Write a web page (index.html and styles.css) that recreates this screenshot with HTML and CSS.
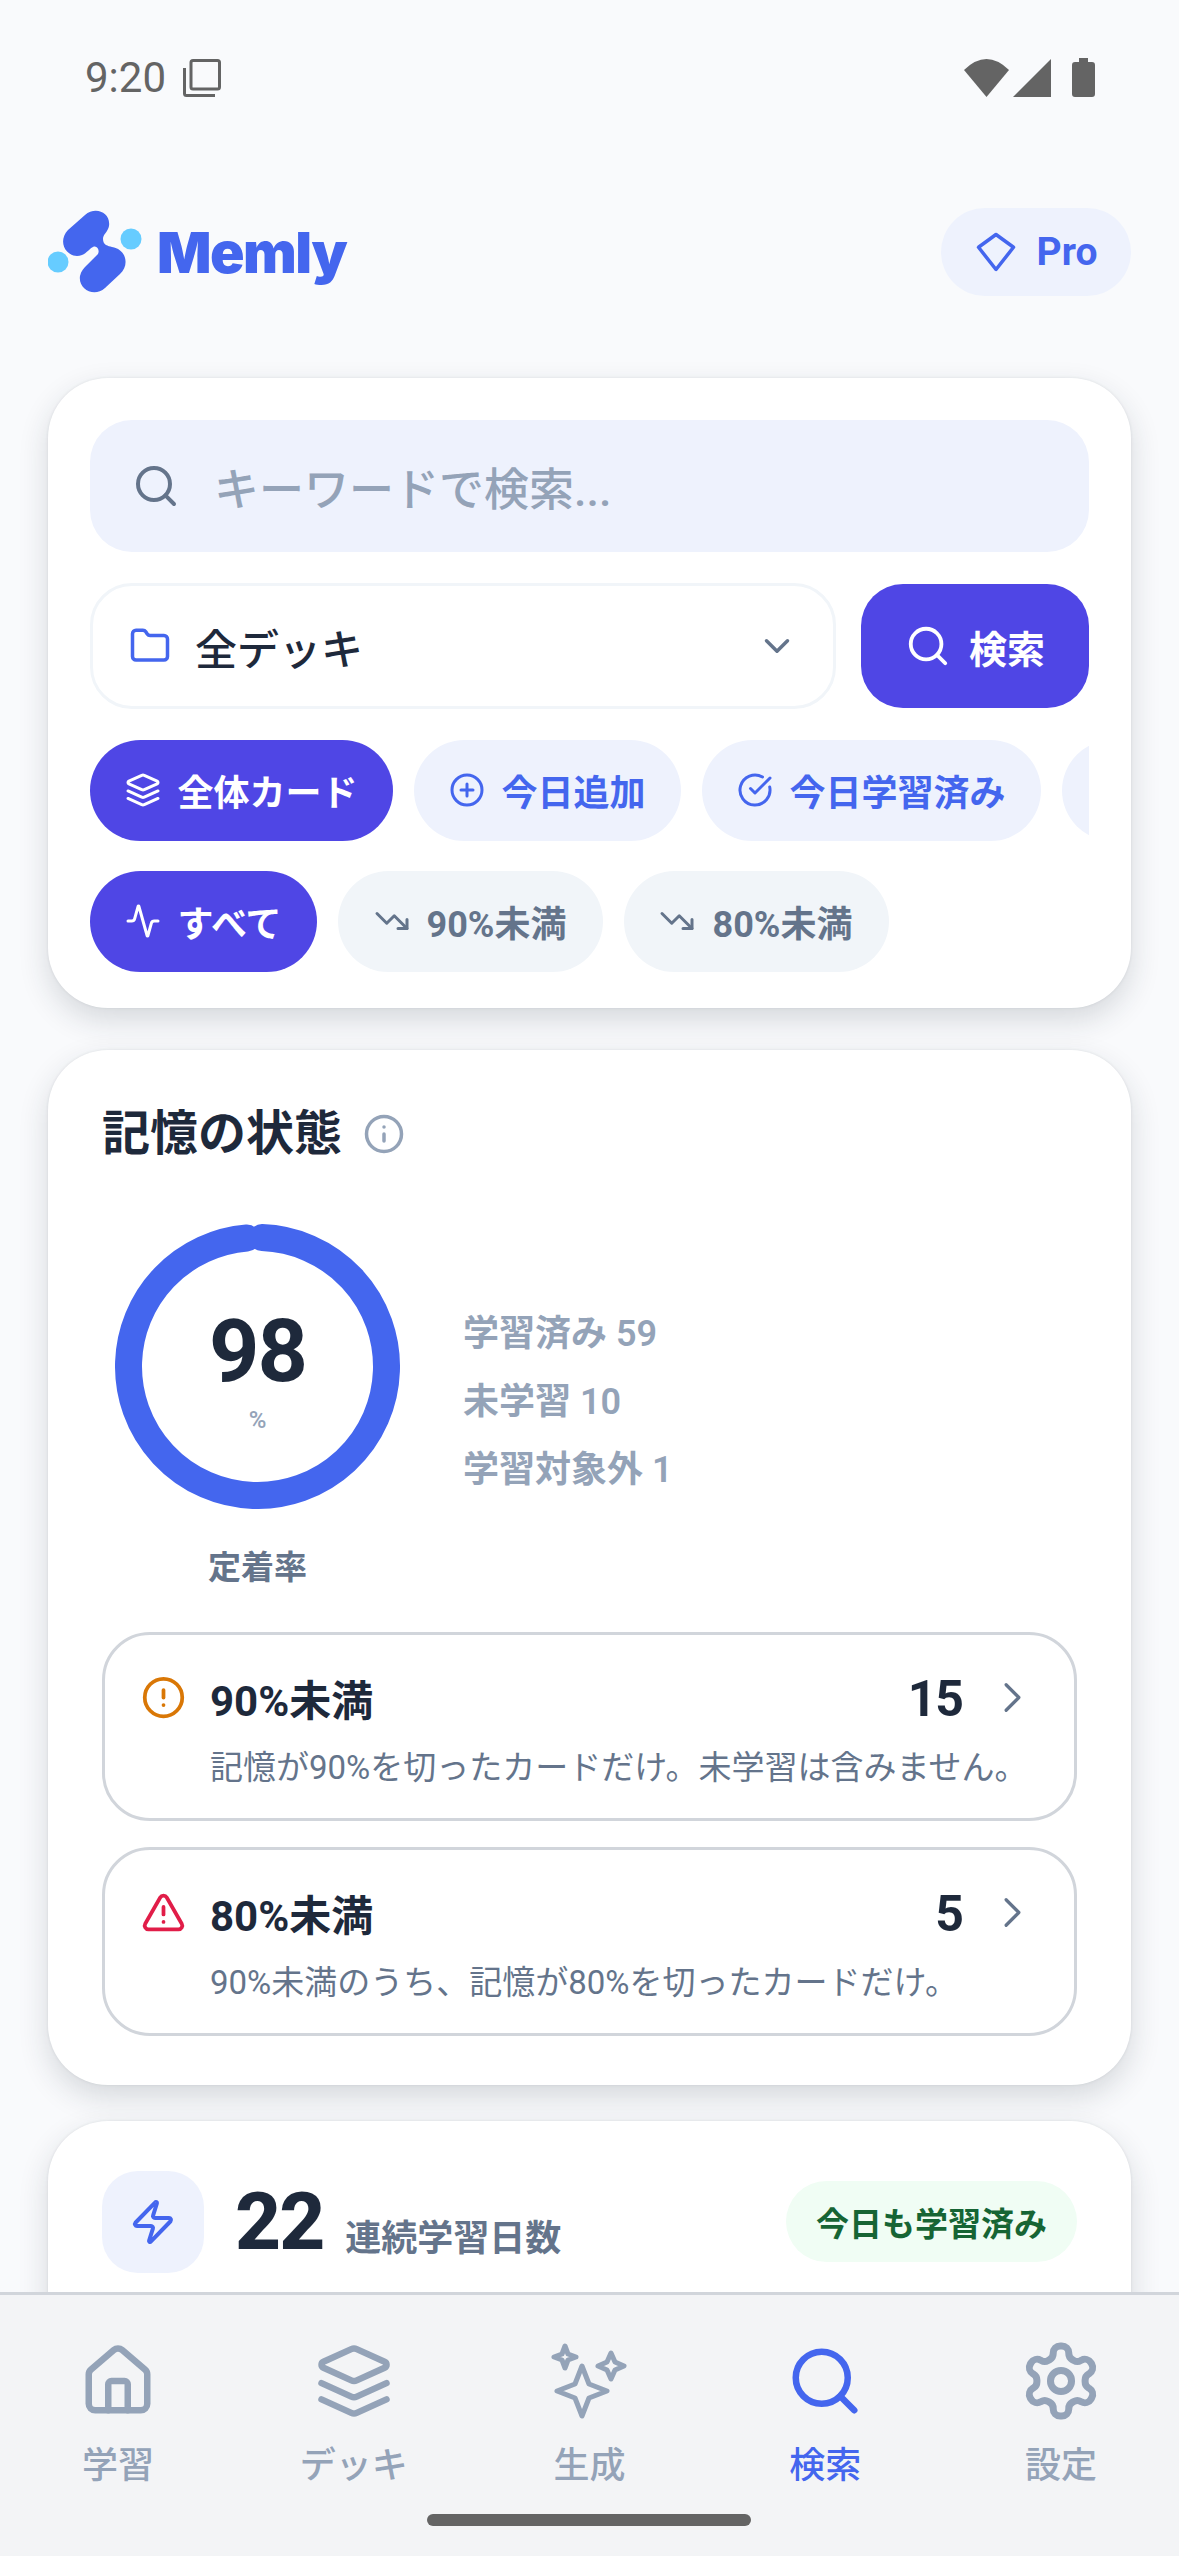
FILE: index.html
```html
<!DOCTYPE html>
<html lang="ja">
<head>
<meta charset="utf-8">
<title>Memly</title>
<link rel="stylesheet" href="styles.css">
</head>
<body>
<div class="app">
  <div class="status">
    <div class="status-left">
      <span class="time">9:20</span>
      <svg class="st-copy" viewBox="0 0 38 38" fill="none" stroke="#646464" stroke-width="3"><rect x="8" y="1.500" width="28.500" height="28.500" rx="2"/><path d="M1.500 9v25.500a2 2 0 0 0 2 2H32"/></svg>
    </div>
    <div class="status-right">
      <svg class="st-wifi" viewBox="0 0 45 38"><path fill="#646464" d="M22.500 38 0 11Q22.500-11 45 11Z"/></svg>
      <svg class="st-sig" viewBox="0 0 38 38"><path fill="#646464" d="M38 0v38H0Z"/></svg>
      <svg class="st-bat" viewBox="0 0 23 39"><path fill="#646464" d="M7 0h9v4h4a3 3 0 0 1 3 3v29a3 3 0 0 1-3 3H3a3 3 0 0 1-3-3V7a3 3 0 0 1 3-3h4Z"/></svg>
    </div>
  </div>

  <header class="top">
    <div class="brand">
      <svg class="logo" viewBox="0 0 94 86">
        <circle cx="10" cy="53" r="10.500" fill="#66ccff"/>
        <circle cx="83" cy="30" r="10.500" fill="#66ccff"/>
        <path fill="#4466ee" d="M20 21 37 6C47-3 63 3 61 17C60 23 55 25 55 30C55 36 60 37 64 38C78 40 82 56 72 65L57 79C46 89 30 80 32 67C33 62 36 59 39 56L50 45C52 41 49 36 45 38C41 40 39 44 34 46C20 51 8 34 20 21Z"/>
      </svg>
      <span class="wordmark">Memly</span>
    </div>
    <div class="pro">
      <svg class="ic ic-42 c-blue" viewBox="0 0 24 24"><path d="M12 2 22 9.300 12 22 2 9.300Z"/></svg>
      <span>Pro</span>
    </div>
  </header>

  <main class="content">
    <section class="card search-card">
      <div class="search-input">
        <svg class="ic ic-48 c-slate" viewBox="0 0 24 24"><circle cx="11" cy="11" r="8"/><path d="m21 21-4.300-4.300"/></svg>
        <span class="placeholder">キーワードで検索...</span>
      </div>
      <div class="select-row">
        <div class="select">
          <svg class="ic ic-42 c-blue" viewBox="0 0 24 24"><path d="M20 20a2 2 0 0 0 2-2V8a2 2 0 0 0-2-2h-7.900a2 2 0 0 1-1.690-.9L9.600 3.900A2 2 0 0 0 7.930 3H4a2 2 0 0 0-2 2v13a2 2 0 0 0 2 2Z"/></svg>
          <span class="select-label">全デッキ</span>
          <svg class="ic ic-42 c-slate" viewBox="0 0 24 24"><path d="m6 9 6 6 6-6"/></svg>
        </div>
        <div class="search-btn">
          <svg class="ic ic-46 c-white" viewBox="0 0 24 24"><circle cx="11" cy="11" r="8"/><path d="m21 21-4.300-4.300"/></svg>
          <span>検索</span>
        </div>
      </div>
      <div class="chips">
        <div class="chip active">
          <svg class="ic ic-36 c-white" viewBox="0 0 24 24"><path d="m12.830 2.180a2 2 0 0 0-1.660 0L2.600 6.080a1 1 0 0 0 0 1.830l8.580 3.910a2 2 0 0 0 1.660 0l8.580-3.900a1 1 0 0 0 0-1.830Z"/><path d="m22 17.650-9.170 4.160a2 2 0 0 1-1.660 0L2 17.650"/><path d="m22 12.650-9.170 4.160a2 2 0 0 1-1.660 0L2 12.650"/></svg>
          <span>全体カード</span>
        </div>
        <div class="chip blue">
          <svg class="ic ic-36 c-blue" viewBox="0 0 24 24"><circle cx="12" cy="12" r="10"/><path d="M8 12h8"/><path d="M12 8v8"/></svg>
          <span>今日追加</span>
        </div>
        <div class="chip blue">
          <svg class="ic ic-36 c-blue" viewBox="0 0 24 24"><path d="M21.801 10A10 10 0 1 1 17 3.335"/><path d="m9 11 3 3L22 4"/></svg>
          <span>今日学習済み</span>
        </div>
        <div class="chip blue chip-peek"></div>
      </div>
      <div class="chips chips-second">
        <div class="chip active">
          <svg class="ic ic-36 c-white" viewBox="0 0 24 24"><path d="M22 12h-2.480a2 2 0 0 0-1.930 1.460l-2.350 8.360a.25.25 0 0 1-.48 0L9.240 2.180a.25.25 0 0 0-.48 0l-2.350 8.360A2 2 0 0 1 4.490 12H2"/></svg>
          <span>すべて</span>
        </div>
        <div class="chip gray">
          <svg class="ic ic-36 c-slate" viewBox="0 0 24 24"><path d="M16 17h6v-6"/><path d="m22 17-8.500-8.500-5 5L2 7"/></svg>
          <span>90%未満</span>
        </div>
        <div class="chip gray">
          <svg class="ic ic-36 c-slate" viewBox="0 0 24 24"><path d="M16 17h6v-6"/><path d="m22 17-8.500-8.500-5 5L2 7"/></svg>
          <span>80%未満</span>
        </div>
      </div>
    </section>

    <section class="card memory-card">
      <div class="title-row">
        <h2 class="title">記憶の状態</h2>
        <svg class="ic ic-42 c-muted" viewBox="0 0 24 24"><circle cx="12" cy="12" r="10"/><path d="M12 16v-4"/><path d="M12 8h.01"/></svg>
      </div>
      <div class="gauge-row">
        <div class="gauge-col">
          <div class="gauge">
            <svg class="ring" viewBox="0 0 285 285"><circle cx="142.500" cy="142.500" r="129" fill="none" stroke="#4466ee" stroke-width="27" stroke-dasharray="795 16" stroke-linecap="round" transform="rotate(-88 142.500 142.500)"/></svg>
            <div class="gauge-text">
              <span class="pct">98</span>
              <span class="pct-unit">%</span>
            </div>
          </div>
          <div class="gauge-label">定着率</div>
        </div>
        <ul class="stats">
          <li>学習済み 59</li>
          <li>未学習 10</li>
          <li>学習対象外 1</li>
        </ul>
      </div>
      <div class="alert">
        <div class="alert-head">
          <svg class="ic ic-45 c-amber" viewBox="0 0 24 24"><circle cx="12" cy="12" r="10"/><path d="M12 8v4"/><path d="M12 16h.01"/></svg>
          <span class="alert-title">90%未満</span>
          <span class="alert-count">15</span>
          <svg class="ic ic-51 c-slate chev" viewBox="0 0 24 24"><path d="m9 18 6-6-6-6"/></svg>
        </div>
        <p class="alert-desc">記憶が90%を切ったカードだけ。未学習は含みません。</p>
      </div>
      <div class="alert">
        <div class="alert-head">
          <svg class="ic ic-45 c-rose" viewBox="0 0 24 24"><path d="m21.730 18-8-14a2 2 0 0 0-3.480 0l-8 14A2 2 0 0 0 4 21h16a2 2 0 0 0 1.730-3"/><path d="M12 9v4"/><path d="M12 17h.01"/></svg>
          <span class="alert-title">80%未満</span>
          <span class="alert-count">5</span>
          <svg class="ic ic-51 c-slate chev" viewBox="0 0 24 24"><path d="m9 18 6-6-6-6"/></svg>
        </div>
        <p class="alert-desc">90%未満のうち、記憶が80%を切ったカードだけ。</p>
      </div>
    </section>

    <section class="card streak-card">
      <div class="streak-icon">
        <svg class="ic ic-48 c-blue" viewBox="0 0 24 24"><path d="M4 14a1 1 0 0 1-.78-1.630l9.900-10.200a.5.5 0 0 1 .86.46l-1.920 6.020A1 1 0 0 0 13 10h7a1 1 0 0 1 .78 1.630l-9.900 10.200a.5.5 0 0 1-.86-.46l1.920-6.020A1 1 0 0 0 11 14z"/></svg>
      </div>
      <span class="streak-num">22</span>
      <span class="streak-label">連続学習日数</span>
      <span class="streak-pill">今日も学習済み</span>
    </section>
  </main>

  <nav class="nav">
    <div class="nav-item">
      <svg class="ic nav-ic" viewBox="0 0 24 24"><path d="M15 21v-8a1 1 0 0 0-1-1h-4a1 1 0 0 0-1 1v8"/><path d="M3 10a2 2 0 0 1 .709-1.528l7-5.999a2 2 0 0 1 2.582 0l7 5.999A2 2 0 0 1 21 10v9a2 2 0 0 1-2 2H5a2 2 0 0 1-2-2z"/></svg>
      <span>学習</span>
    </div>
    <div class="nav-item">
      <svg class="ic nav-ic" viewBox="0 0 24 24"><path d="m12.830 2.180a2 2 0 0 0-1.660 0L2.600 6.080a1 1 0 0 0 0 1.830l8.580 3.910a2 2 0 0 0 1.660 0l8.580-3.900a1 1 0 0 0 0-1.830Z"/><path d="m22 17.650-9.170 4.160a2 2 0 0 1-1.660 0L2 17.650"/><path d="m22 12.650-9.170 4.160a2 2 0 0 1-1.660 0L2 12.650"/></svg>
      <span>デッキ</span>
    </div>
    <div class="nav-item">
      <svg class="ic nav-ic nav-sparkle" viewBox="0 0 78 78"><path d="M32 24 39 42 57 49 39 56 32 74 25 56 7 49 25 42Z"/><path d="M15 4 18 12 26 15 18 18 15 26 12 18 4 15 12 12Z"/><path d="M61 11 65 20 74 24 65 28 61 37 57 28 48 24 57 20Z"/></svg>
      <span>生成</span>
    </div>
    <div class="nav-item active">
      <svg class="ic nav-ic" viewBox="0 0 24 24"><circle cx="11" cy="11" r="8"/><path d="m21 21-4.300-4.300"/></svg>
      <span>検索</span>
    </div>
    <div class="nav-item">
      <svg class="ic nav-ic nav-gear" viewBox="0 0 24 24"><path d="M12.220 2h-.44a2 2 0 0 0-2 2v.18a2 2 0 0 1-1 1.730l-.43.25a2 2 0 0 1-2 0l-.15-.08a2 2 0 0 0-2.730.73l-.22.38a2 2 0 0 0 .73 2.730l.15.1a2 2 0 0 1 1 1.720v.51a2 2 0 0 1-1 1.740l-.15.09a2 2 0 0 0-.73 2.730l.22.38a2 2 0 0 0 2.730.73l.15-.08a2 2 0 0 1 2 0l.43.25a2 2 0 0 1 1 1.730V20a2 2 0 0 0 2 2h.44a2 2 0 0 0 2-2v-.18a2 2 0 0 1 1-1.730l.43-.25a2 2 0 0 1 2 0l.15.08a2 2 0 0 0 2.730-.73l.22-.39a2 2 0 0 0-.73-2.730l-.15-.08a2 2 0 0 1-1-1.740v-.5a2 2 0 0 1 1-1.740l.15-.09a2 2 0 0 0 .73-2.730l-.22-.38a2 2 0 0 0-2.730-.73l-.15.08a2 2 0 0 1-2 0l-.43-.25a2 2 0 0 1-1-1.730V4a2 2 0 0 0-2-2z"/><circle cx="12" cy="12" r="3"/></svg>
      <span>設定</span>
    </div>
    <div class="home-bar"></div>
  </nav>
</div>
</body>
</html>
```

FILE: styles.css
```css
* { box-sizing: border-box; margin: 0; padding: 0; }
html, body { width: 1179px; height: 2556px; overflow: hidden; }
body {
  background: #f9fafc;
  font-family: Roboto, "Noto Sans CJK JP", sans-serif;
  color: #1e293b;
}
.app { display: flex; flex-direction: column; height: 2556px; }

.ic { fill: none; stroke: currentColor; stroke-width: 2; stroke-linecap: round; stroke-linejoin: round; flex: none; display: block; }
.ic-36 { width: 36px; height: 36px; }
.ic-42 { width: 42px; height: 42px; }
.ic-45 { width: 45px; height: 45px; }
.ic-46 { width: 46px; height: 46px; }
.ic-48 { width: 48px; height: 48px; }
.ic-51 { width: 51px; height: 51px; }
.c-blue { color: #4466ee; }
.c-slate { color: #64748b; }
.c-muted { color: #94a3b8; }
.c-white { color: #fff; }
.c-amber { color: #d97706; }
.c-rose { color: #e11d48; }
.chev { stroke-width: 1.500; }

.status { height: 156px; padding: 56px 84px 0 85px; display: flex; justify-content: space-between; align-items: flex-start; flex: none; }
.status-left { display: flex; align-items: center; gap: 17px; }
.time { font-size: 42px; line-height: 44px; color: #646464; }
.st-copy { width: 38px; height: 38px; }
.status-right { display: flex; align-items: center; gap: 4px; padding-top: 2px; }
.st-wifi { width: 45px; height: 38px; }
.st-sig { width: 38px; height: 38px; }
.st-bat { width: 23px; height: 39px; margin-left: 17px; }

.top { display: flex; justify-content: space-between; align-items: center; height: 88px; margin-top: 52px; padding: 0 48px; flex: none; }
.brand { display: flex; align-items: center; gap: 15px; }
.logo { width: 94px; height: 86px; }
.wordmark { font-family: Inter, sans-serif; font-size: 57px; font-weight: 900; letter-spacing: -1.500px; color: #4466ee; line-height: 1; }
.pro { width: 190px; height: 88px; background: #eef2fd; border-radius: 44px; display: flex; align-items: center; justify-content: center; gap: 20px; color: #4466ee; font-size: 39px; font-weight: 700; }

.content { flex: 1; min-height: 0; overflow: hidden; padding: 82px 48px 0; display: flex; flex-direction: column; gap: 36px; }
.card { flex: none; background: #fff; border-radius: 60px; box-shadow: 0 12px 30px rgba(30, 41, 59, .16), 0 0 3px rgba(30, 41, 59, .1); }

.search-card { height: 630px; padding: 42px 42px 0; display: flex; flex-direction: column; }
.search-input { height: 132px; background: #eef2fd; border-radius: 42px; display: flex; align-items: center; gap: 34px; padding: 0 42px; flex: none; }
.placeholder { font-size: 45px; color: #94a3b8; font-weight: 500; }
.select-row { display: flex; gap: 25px; margin-top: 31px; height: 126px; flex: none; }
.select { flex: 1; border: 3px solid #f1f5f9; border-radius: 42px; display: flex; align-items: center; padding: 0 35px 0 36px; gap: 24px; }
.select-label { font-size: 42px; font-weight: 500; color: #1e293b; flex: 1; }
.search-btn { width: 228px; background: #4f46e5; border-radius: 42px; display: flex; align-items: center; justify-content: center; gap: 18px; color: #fff; font-size: 38px; font-weight: 700; margin: 1px 0; }
.chips { display: flex; gap: 21px; height: 101px; margin-top: 31px; overflow: hidden; flex: none; }
.chips-second { margin-top: 30px; }
.chip { height: 101px; border-radius: 51px; display: flex; align-items: center; gap: 17px; padding: 0 35.500px 2px 34.500px; font-size: 36px; font-weight: 700; white-space: nowrap; flex: none; }
.chip-peek { width: 200px; }
.chip.active { background: #4f46e5; color: #fff; }
.chip.blue { background: #eef2fd; color: #4466ee; }
.chip.gray { background: #f1f5f9; color: #64748b; padding: 0 36.500px 2px 35.500px; }

.memory-card { height: 1035px; margin-top: 6px; padding: 60px 54px 0; }
.title-row { display: flex; align-items: center; gap: 21px; height: 48px; }
.title { font-size: 48px; font-weight: 700; line-height: 48px; color: #1e293b; }
.gauge-row { display: flex; align-items: flex-start; margin-top: 66px; height: 408px; padding-left: 13px; gap: 63px; }
.gauge-col { width: 285px; display: flex; flex-direction: column; align-items: center; }
.gauge { width: 285px; height: 285px; position: relative; }
.ring { width: 285px; height: 285px; display: block; }
.gauge-text { position: absolute; inset: 0; display: flex; flex-direction: column; align-items: center; justify-content: center; padding-top: 10px; }
.pct { font-size: 88px; font-weight: 700; letter-spacing: -2px; line-height: 84px; color: #1e293b; }
.pct-unit { font-size: 24px; line-height: 30px; margin-top: 12px; color: #94a3b8; font-weight: 500; }
.gauge-label { margin-top: 39px; font-size: 33px; line-height: 40px; font-weight: 700; color: #64748b; }
.stats { list-style: none; margin-top: 88px; display: flex; flex-direction: column; gap: 24px; }
.stats li { font-size: 36px; line-height: 44px; font-weight: 600; color: #94a3b8; }
.alert { height: 189px; border: 3px solid #d1d5db; border-radius: 48px; padding: 36px 36px 0 36px; margin-top: 26px; }
.gauge-row + .alert { margin-top: 0; }
.alert-head { display: flex; align-items: center; gap: 24px; height: 52px; }
.alert-title { font-size: 42px; font-weight: 700; flex: 1; color: #1e293b; }
.alert-count { font-size: 50px; font-weight: 700; letter-spacing: -1px; padding-top: 3px; color: #1e293b; }
.alert-desc { font-size: 33px; line-height: 44px; margin: 23px 0 0 69px; color: #64748b; white-space: nowrap; }

.streak-card { height: 300px; padding: 50px 54px 0; display: flex; align-items: flex-start; }
.streak-icon { width: 102px; height: 102px; background: #eef2fd; border-radius: 36px; display: flex; align-items: center; justify-content: center; flex: none; }
.streak-num { font-size: 80px; line-height: 102px; font-weight: 800; letter-spacing: -2px; margin-left: 31px; color: #1e293b; }
.streak-label { font-size: 36px; font-weight: 700; color: #64748b; margin: 43px 0 0 22px; line-height: 50px; flex: 1; }
.streak-pill { height: 81px; margin-top: 10px; padding: 0 30px; border-radius: 41px; background: #f0fdf4; color: #166534; font-size: 33px; font-weight: 700; display: flex; align-items: center; }

.nav { flex: none; height: 264px; background: #f3f4f6; border-top: 3px solid #d1d5db; position: relative; display: grid; grid-template-columns: repeat(5, 235.800px); padding-top: 47px; }
.nav-item { display: flex; flex-direction: column; align-items: center; color: #94a3b8; font-size: 36px; font-weight: 500; }
.nav-item span { margin-top: 22px; line-height: 48px; }
.nav-item.active { color: #4466ee; }
.nav-ic { width: 78px; height: 78px; }
.nav-sparkle { stroke-width: 5; }
.nav-gear { transform: scale(1.080); }
.home-bar { position: absolute; left: 427px; top: 219px; width: 324px; height: 12px; border-radius: 6px; background: #646464; }
```
